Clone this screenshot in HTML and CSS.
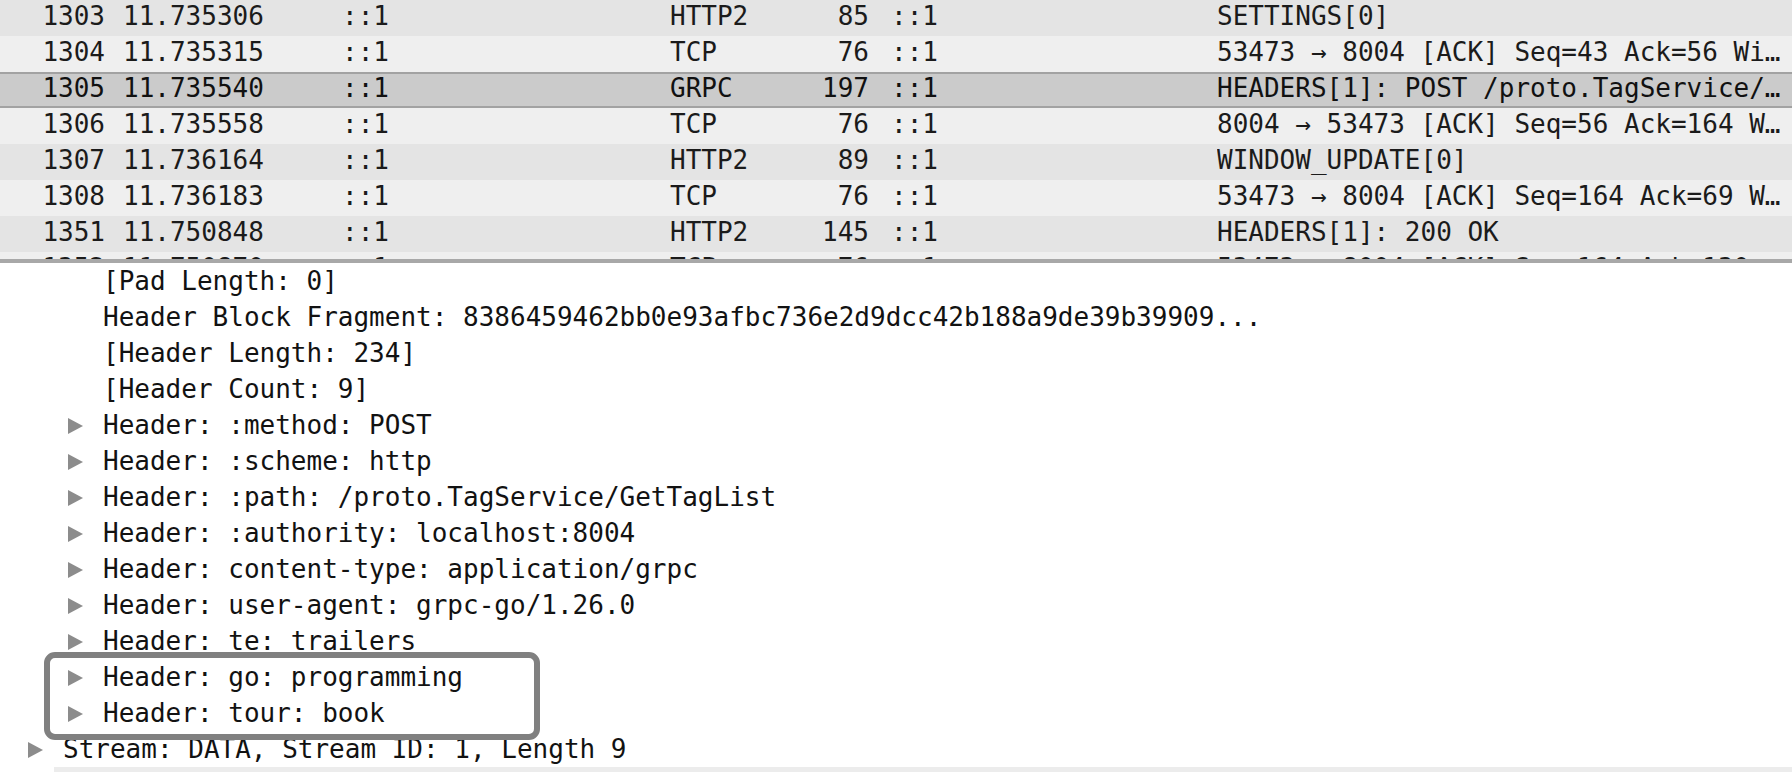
FILE: index.html
```html
<!DOCTYPE html>
<html lang="en">
<head>
<meta charset="utf-8">
<title>Wireshark – gRPC headers</title>
<link rel="stylesheet" href="styles.css">
</head>
<body>
<div class="app">
  <div class="packet-list">
    <div class="row even"><span class="c-no">1303</span><span class="c-time">11.735306</span><span class="c-src">::1</span><span class="c-proto">HTTP2</span><span class="c-len">85</span><span class="c-dst">::1</span><span class="c-info">SETTINGS[0]</span></div>
    <div class="row odd"><span class="c-no">1304</span><span class="c-time">11.735315</span><span class="c-src">::1</span><span class="c-proto">TCP</span><span class="c-len">76</span><span class="c-dst">::1</span><span class="c-info">53473 → 8004 [ACK] Seq=43 Ack=56 Wi…</span></div>
    <div class="row selected"><span class="c-no">1305</span><span class="c-time">11.735540</span><span class="c-src">::1</span><span class="c-proto">GRPC</span><span class="c-len">197</span><span class="c-dst">::1</span><span class="c-info">HEADERS[1]: POST /proto.TagService/…</span></div>
    <div class="row odd"><span class="c-no">1306</span><span class="c-time">11.735558</span><span class="c-src">::1</span><span class="c-proto">TCP</span><span class="c-len">76</span><span class="c-dst">::1</span><span class="c-info">8004 → 53473 [ACK] Seq=56 Ack=164 W…</span></div>
    <div class="row even"><span class="c-no">1307</span><span class="c-time">11.736164</span><span class="c-src">::1</span><span class="c-proto">HTTP2</span><span class="c-len">89</span><span class="c-dst">::1</span><span class="c-info">WINDOW_UPDATE[0]</span></div>
    <div class="row odd"><span class="c-no">1308</span><span class="c-time">11.736183</span><span class="c-src">::1</span><span class="c-proto">TCP</span><span class="c-len">76</span><span class="c-dst">::1</span><span class="c-info">53473 → 8004 [ACK] Seq=164 Ack=69 W…</span></div>
    <div class="row even"><span class="c-no">1351</span><span class="c-time">11.750848</span><span class="c-src">::1</span><span class="c-proto">HTTP2</span><span class="c-len">145</span><span class="c-dst">::1</span><span class="c-info">HEADERS[1]: 200 OK</span></div>
    <div class="row odd"><span class="c-no">1352</span><span class="c-time">11.750870</span><span class="c-src">::1</span><span class="c-proto">TCP</span><span class="c-len">76</span><span class="c-dst">::1</span><span class="c-info">53473 → 8004 [ACK] Seq=164 Ack=130 …</span></div>
  </div>
  <div class="pane-divider"></div>
  <div class="details">
    <div class="line lvl2">[Pad Length: 0]</div>
    <div class="line lvl2">Header Block Fragment: 8386459462bb0e93afbc736e2d9dcc42b188a9de39b39909...</div>
    <div class="line lvl2">[Header Length: 234]</div>
    <div class="line lvl2">[Header Count: 9]</div>
    <div class="line lvl2 tree"><span class="arrow"></span>Header: :method: POST</div>
    <div class="line lvl2 tree"><span class="arrow"></span>Header: :scheme: http</div>
    <div class="line lvl2 tree"><span class="arrow"></span>Header: :path: /proto.TagService/GetTagList</div>
    <div class="line lvl2 tree"><span class="arrow"></span>Header: :authority: localhost:8004</div>
    <div class="line lvl2 tree"><span class="arrow"></span>Header: content-type: application/grpc</div>
    <div class="line lvl2 tree"><span class="arrow"></span>Header: user-agent: grpc-go/1.26.0</div>
    <div class="line lvl2 tree"><span class="arrow"></span>Header: te: trailers</div>
    <div class="line lvl2 tree"><span class="arrow"></span>Header: go: programming</div>
    <div class="line lvl2 tree"><span class="arrow"></span>Header: tour: book</div>
    <div class="line lvl1 tree"><span class="arrow"></span>Stream: DATA, Stream ID: 1, Length 9</div>
    <div class="line peek"></div>
    <div class="highlight-box"></div>
  </div>
</div>
</body>
</html>
```
FILE: styles.css
```css
html, body {
  margin: 0;
  padding: 0;
  background: #ffffff;
  overflow: hidden;
}

.app {
  width: 1792px;
  height: 772px;
  overflow: hidden;
  font-family: "DejaVu Sans Mono", "Liberation Mono", monospace;
  font-size: 26px;
  color: #1b1b1b;
}

/* ---------- packet list ---------- */
.packet-list {
  height: 259px;
  overflow: hidden;
}

.row {
  display: grid;
  grid-template-columns: 105px 237px 328px 125px 74px 348px 1fr;
  height: 36px;
  line-height: 33px;
  white-space: nowrap;
}

.row.even { background: #e4e4e4; }
.row.odd { background: #efefef; }
.row.selected {
  background: #cbcbcb;
  box-shadow: inset 0 2px 0 #a2a2a2, inset 0 -2px 0 #a2a2a2;
  color: #111111;
}

.c-no { text-align: right; }
.c-time { padding-left: 18px; }
.c-len { text-align: right; }
.c-dst { padding-left: 22px; }
.c-info { overflow: hidden; }

.pane-divider {
  height: 4px;
  background: #a8a8a8;
}

/* ---------- packet details ---------- */
.details {
  position: relative;
  color: #121212;
}

.line {
  height: 36px;
  line-height: 36px;
  white-space: nowrap;
  display: flex;
  align-items: center;
}

.lvl2 { padding-left: 103px; }
.lvl1 { padding-left: 63px; }

.tree { position: relative; }

.arrow {
  position: absolute;
  width: 0;
  height: 0;
  border-left: 15px solid #8c8c8c;
  border-top: 8px solid transparent;
  border-bottom: 8px solid transparent;
  top: 11px;
}

.lvl2 .arrow { left: 68px; }
.lvl1 .arrow { left: 28px; }

.peek {
  margin-left: 54px;
  background: #ececec;
}

.highlight-box {
  position: absolute;
  left: 44px;
  top: 389px;
  width: 496px;
  height: 88px;
  box-sizing: border-box;
  border: 6px solid #808080;
  border-radius: 11px;
}
```
